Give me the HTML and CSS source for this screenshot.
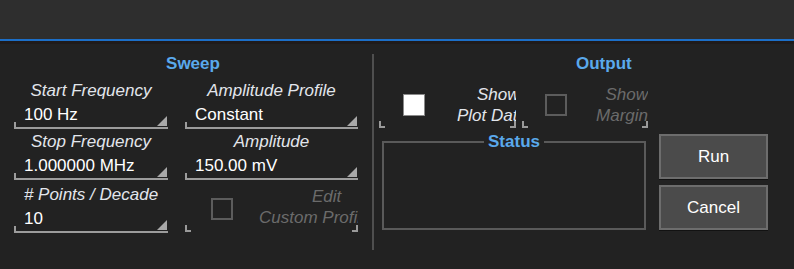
FILE: index.html
```html
<!DOCTYPE html>
<html lang="en">

<head>
    <meta charset="UTF-8">
    <meta name="viewport" content="width=device-width, initial-scale=1.0">
    <title>Frequency Sweep</title>
    <link rel="stylesheet" href="styles.css">
</head>

<body>
    <div class="topbar"></div>

    <div class="main">
        <div class="sweep">
            <div class="panel-title sweep-title">Sweep</div>
            <div class="sweep-grid">
                <div class="field">
                    <div class="field-label">Start Frequency</div>
                    <div class="field-value">100 Hz</div>
                </div>
                <div class="field">
                    <div class="field-label">Amplitude Profile</div>
                    <div class="field-value">Constant</div>
                </div>
                <div class="field">
                    <div class="field-label">Stop Frequency</div>
                    <div class="field-value">1.000000 MHz</div>
                </div>
                <div class="field">
                    <div class="field-label">Amplitude</div>
                    <div class="field-value">150.00 mV</div>
                </div>
                <div class="field last-row">
                    <div class="field-label"># Points / Decade</div>
                    <div class="field-value">10</div>
                </div>
                <div class="toggle toggle-edit disabled last-row">
                    <span class="check"></span>
                    <div class="toggle-text">
                        <div class="edit-line">Edit</div>
                        <div>Custom Profile</div>
                    </div>
                </div>
            </div>
        </div>

        <div class="divider"></div>

        <div class="output">
            <div class="panel-title output-title">Output</div>
            <div class="toggles">
                <div class="toggle toggle-plot">
                    <span class="check on"></span>
                    <div class="toggle-text">
                        <div class="show-line">Show</div>
                        <div>Plot Data</div>
                    </div>
                </div>
                <div class="toggle toggle-margin disabled">
                    <span class="check"></span>
                    <div class="toggle-text">
                        <div>Show</div>
                        <div>Margin</div>
                    </div>
                </div>
            </div>
            <div class="actions">
                <fieldset class="status">
                    <legend>Status</legend>
                </fieldset>
                <div class="buttons">
                    <button class="btn">Run</button>
                    <button class="btn">Cancel</button>
                </div>
            </div>
        </div>
    </div>
</body>

</html>
```

FILE: styles.css
```css
body {
    margin: 0;
    background: #222222;
    font-family: "Liberation Sans", Arial, sans-serif;
    font-size: 17px;
    color: #e2e6ec;
}

.topbar {
    height: 39px;
    background: #2e2e2e;
    border-bottom: 2px solid #1c6fc8;
}

.main {
    display: flex;
    border-top: 3px solid #1f1b1b;
    padding-top: 10px;
}

.panel-title {
    font-size: 17px;
    font-weight: bold;
    line-height: 20px;
    color: #5aa9ec;
    text-align: center;
}

/* sweep side */

.sweep {
    flex: none;
    width: 372px;
    padding-left: 14px;
    box-sizing: border-box;
}

.sweep-title {
    margin-bottom: 7px;
}

.sweep-grid {
    display: grid;
    grid-template-columns: 154px 173px;
    column-gap: 17px;
    row-gap: 3px;
}

.last-row {
    margin-top: 2px;
}

.field-label {
    height: 20px;
    line-height: 20px;
    font-style: italic;
    text-align: center;
    white-space: nowrap;
}

.field-value {
    position: relative;
    margin-top: 4px;
    height: 20px;
    line-height: 20px;
    padding: 0 0 2px 10px;
    color: #ffffff;
    border-bottom: 2px solid #9c9c9c;
}

.field-value::before {
    content: "";
    position: absolute;
    left: 0;
    bottom: 0;
    width: 2px;
    height: 5px;
    background: #9c9c9c;
}

.field-value::after {
    content: "";
    position: absolute;
    right: 1px;
    bottom: 1px;
    width: 10px;
    height: 10px;
    background: #a8a8a8;
    clip-path: polygon(100% 0, 100% 100%, 0 100%);
}

/* divider */

.divider {
    flex: none;
    width: 2px;
    height: 196px;
    background: #4f4f4f;
}

/* output side */

.output {
    flex: none;
    padding-left: 5px;
}

.output-title {
    text-align: left;
    padding-left: 197px;
    margin-bottom: 8px;
}

.toggles {
    display: flex;
    column-gap: 6px;
}

.toggle {
    position: relative;
    display: flex;
    align-items: center;
    height: 46px;
    box-sizing: border-box;
    font-style: italic;
    line-height: 21px;
}

.toggle::before,
.toggle::after {
    content: "";
    position: absolute;
    bottom: 0;
    width: 6px;
    height: 7px;
    box-sizing: border-box;
    border-bottom: 2px solid #9a9a9a;
}

.toggle::before {
    left: 0;
    border-left: 2px solid #9a9a9a;
}

.toggle::after {
    right: 0;
    border-right: 2px solid #9a9a9a;
}

.check {
    flex: none;
    width: 22px;
    height: 22px;
    box-sizing: border-box;
    border: 2px solid #5c5c5c;
}

.check.on {
    background: #ffffff;
    border: 1px solid #8a8a8a;
}

.toggle-text {
    overflow: hidden;
    white-space: nowrap;
}

.disabled .toggle-text {
    color: #6b6b6b;
}

.toggle-plot {
    width: 137px;
    padding-left: 24px;
}

.toggle-plot .toggle-text {
    width: 59px;
    margin-left: 32px;
}

.show-line {
    padding-left: 20px;
}

.toggle-margin {
    width: 126px;
    padding-left: 23px;
}

.toggle-margin .toggle-text {
    flex: 1;
    text-align: right;
}

.toggle-edit {
    height: 47px;
    padding-left: 26px;
}

.toggle-edit .toggle-text {
    flex: 1;
    margin-left: 26px;
    padding-bottom: 3px;
}

.edit-line {
    padding-left: 53px;
}

.actions {
    display: flex;
    margin-top: 4px;
}

.status {
    width: 264px;
    height: 98px;
    box-sizing: border-box;
    margin: 0 0 0 3px;
    padding: 0;
    border: 2px solid #5a5a5a;
}

.status legend {
    margin: 0 auto;
    padding: 0 4px;
    font-size: 17px;
    font-weight: bold;
    line-height: 20px;
    color: #5aa9ec;
}

.buttons {
    display: flex;
    flex-direction: column;
    row-gap: 6px;
    margin: 2px 0 0 13px;
}

.btn {
    width: 109px;
    height: 45px;
    background: #4b4b4b;
    border: 2px solid #6d6d6d;
    box-shadow: 0 1px 0 #121212;
    color: #ffffff;
    font-family: "Liberation Sans", Arial, sans-serif;
    font-size: 17px;
    cursor: pointer;
}
```
